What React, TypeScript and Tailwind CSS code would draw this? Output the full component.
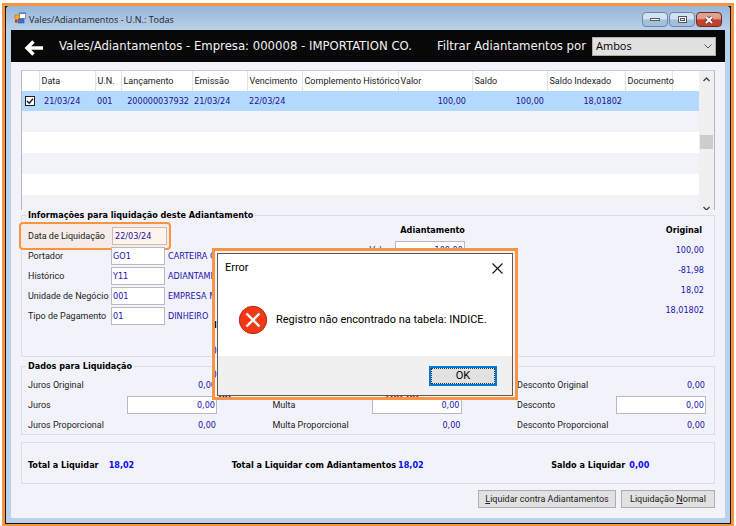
import { useState } from "react";
import type { ReactNode } from "react";

const columns = [
  { label: "", width: "w-[17px]" },
  { label: "Data", width: "w-[56px]" },
  { label: "U.N.", width: "w-[26px]" },
  { label: "Lançamento", width: "w-[71px]" },
  { label: "Emissão", width: "w-[55px]" },
  { label: "Vencimento", width: "w-[55px]" },
  { label: "Complemento Histórico", width: "w-[96px]" },
  { label: "Valor", width: "w-[74px]" },
  { label: "Saldo", width: "w-[75px]" },
  { label: "Saldo Indexado", width: "w-[78px]" },
  { label: "Documento", width: "w-[47px]" },
  { label: "", width: "w-auto" },
];

const identification = [
  { id: "portador", label: "Portador", value: "GO1", description: "CARTEIRA GERAL" },
  { id: "historico", label: "Histórico", value: "Y11", description: "ADIANTAMENTO" },
  { id: "unidade", label: "Unidade de Negócio", value: "001", description: "EMPRESA MATRIZ" },
  { id: "pagamento", label: "Tipo de Pagamento", value: "01", description: "DINHEIRO" },
];

const originals = ["100,00", "-81,98", "18,02", "18,01802"];
const charges = ["Juros", "Multa", "Desconto"];

const field = "border border-[#b9b9c0] bg-white text-[#1a12b0] outline-none";
const caption = "font-['Roboto','Liberation_Sans',sans-serif] whitespace-nowrap";

function FormIcon() {
  return (
    <svg viewBox="0 0 12 12" className="size-3" aria-hidden="true">
      <rect x="5.5" y="1" width="6" height="5.5" fill="#fff" stroke="#7b8fae" />
      <rect x="5" y="0.5" width="7" height="1.5" fill="#5b85c5" />
      <rect x="1" y="3" width="4.5" height="4.5" fill="#f0b020" stroke="#c06a10" strokeWidth="0.6" />
      <rect x="1" y="8" width="2.6" height="2.6" fill="#d03018" />
      <rect x="4.5" y="7" width="5.5" height="4" fill="#3f74d0" stroke="#27509c" strokeWidth="0.6" />
    </svg>
  );
}

function TitleBar() {
  const plain =
    "flex h-[15px] w-[26px] items-center justify-center rounded-sm border border-[#6f87a5] bg-linear-to-b from-[#d3e2f2] from-45% to-[#a4bfdc] to-55%";
  return (
    <div className="flex h-6 items-center rounded-t-sm bg-linear-to-b from-[#98b6d7] to-[#b9d1ea] pr-2 pl-2">
      <FormIcon />
      <span className="ml-[3px] grow pt-1 font-['Open_Sans','Noto_Sans',sans-serif] text-[9px] text-[#1c2430]">
        Vales/Adiantamentos - U.N.: Todas
      </span>
      <div className="flex gap-px pt-[3px]">
        <button className={plain} aria-label="Minimizar">
          <span className="h-[3px] w-2.5 border border-[#555c68] bg-white" />
        </button>
        <button className={plain} aria-label="Maximizar">
          <span className="flex h-[7px] w-[9px] items-center justify-center border border-[#555c68] bg-white">
            <span className="h-[3px] w-[5px] border border-[#555c68]" />
          </span>
        </button>
        <button
          className="flex h-[15px] w-[26px] items-center justify-center rounded-sm border border-[#6b2b2b] bg-linear-to-b from-[#e0a090] from-40% to-[#c2402c] to-55%"
          aria-label="Fechar"
        >
          <svg viewBox="0 0 10 8" className="h-2 w-2.5" aria-hidden="true">
            <path d="M2 1 8 7M8 1 2 7" stroke="#5a3535" strokeWidth="3.4" />
            <path d="M2 1 8 7M8 1 2 7" stroke="#fff" strokeWidth="2" />
          </svg>
        </button>
      </div>
    </div>
  );
}

function Header() {
  return (
    <header className="flex h-8 items-center bg-[#080808] pr-[9px] pl-3 text-[13px] whitespace-nowrap text-[#f2f2f2]">
      <button aria-label="Voltar" className="mt-[3px]">
        <svg viewBox="0 0 20 16" className="h-4 w-5" aria-hidden="true">
          <path d="M10.5 1.5 4 8l6.500 6.500M3.500 8H20" fill="none" stroke="#fff" strokeWidth="3.400" />
        </svg>
      </button>
      <h1 className="ml-4 grow">Vales/Adiantamentos - Empresa: 000008 - IMPORTATION CO.</h1>
      <label htmlFor="filtro">Filtrar Adiantamentos por</label>
      <div className="relative ml-1.5 w-[124px]">
        <select
          id="filtro"
          className="block h-[19px] w-full appearance-none border border-[#adadad] bg-[#e1e1e1] pl-[3px] font-['Open_Sans','Noto_Sans',sans-serif] text-[11px] leading-4 text-black"
        >
          <option>Ambos</option>
        </select>
        <svg viewBox="0 0 8 5" className="pointer-events-none absolute top-[7px] right-1 h-[5px] w-2" aria-hidden="true">
          <path d="M0.500 0.500 4 4 7.500 0.500" fill="none" stroke="#555" />
        </svg>
      </div>
    </header>
  );
}

function Grid() {
  const [checked, setChecked] = useState(true);
  return (
    <div className="flex h-[140px] overflow-hidden border-x border-t border-[#b5b8c2] border-t-[#c9ccd6] bg-[#f2f3f9]">
      <div className="min-w-0 flex-1">
        <table className="w-full table-fixed border-collapse">
          <thead>
            <tr className={`h-5 bg-white text-left text-[#222] ${caption}`}>
              {columns.map((c, i) => (
                <th
                  key={i}
                  className={`${c.width} border-r border-[#e3e3e8] p-0 pl-[2px] font-normal last:border-r-0`}
                >
                  {c.label}
                </th>
              ))}
            </tr>
          </thead>
          <tbody className="text-[#1a128c]">
            <tr className="h-5 bg-[#b3d9ff]">
              <td className="p-0 pl-[3px]">
                <input
                  type="checkbox"
                  aria-label="Selecionar adiantamento"
                  checked={checked}
                  onChange={() => setChecked(!checked)}
                  className="sr-only"
                />
                <svg viewBox="0 0 10 10" className="size-2.5" aria-hidden="true" onClick={() => setChecked(!checked)}>
                  <rect x="0.5" y="0.5" width="9" height="9" fill="#fff" stroke="#222" />
                  {checked && <path d="M2 5 4.200 7.200 8 2.800" fill="none" stroke="#222" strokeWidth="1.500" />}
                </svg>
              </td>
              <td className="p-0 pl-[5px]">21/03/24</td>
              <td className="p-0 pl-[2px]">001</td>
              <td className="p-0 pr-[3px] text-right">200000037932</td>
              <td className="p-0 pl-[2px]">21/03/24</td>
              <td className="p-0 pl-[2px]">22/03/24</td>
              <td />
              <td className="p-0 pr-1.5 text-right">100,00</td>
              <td className="p-0 pr-[3px] text-right">100,00</td>
              <td className="p-0 pr-[3px] text-right">18,01802</td>
              <td />
              <td />
            </tr>
            {[0, 1, 2, 3, 4].map((n) => (
              <tr key={n} className="h-[21px] odd:bg-white even:bg-[#f2f3f9]">
                <td colSpan={12} />
              </tr>
            ))}
          </tbody>
        </table>
      </div>
      <div className="flex w-[15px] flex-col items-center bg-[#f0f0f0]">
        <svg viewBox="0 0 7 5" className="mt-[6px] h-[5px] w-[7px]" aria-hidden="true">
          <path d="M0.500 4 3.500 1 6.500 4" fill="none" stroke="#444" strokeWidth="1.400" />
        </svg>
        <div className="mt-[53px] h-3.5 w-[13px] bg-[#cdcdcd]" />
        <svg viewBox="0 0 7 5" className="mt-auto -mb-px h-[5px] w-[7px]" aria-hidden="true">
          <path d="M0.500 1 3.500 4 6.500 1" fill="none" stroke="#444" strokeWidth="1.400" />
        </svg>
      </div>
    </div>
  );
}

function Group({ title, className, children }: { title: string; className: string; children: ReactNode }) {
  return (
    <fieldset className={`border border-[#dcdee4] ${className}`}>
      <legend className="ml-[4px] h-2.5 px-[2px] leading-[10px] font-bold text-black">{title}</legend>
      {children}
    </fieldset>
  );
}

function Details() {
  return (
    <Group title="Informações para liquidação deste Adiantamento" className="h-[147px]">
      <div className="grid grid-cols-[64%_1fr]">
        <div className="flex justify-between">
          <div className="pt-[2px]">
            <div className="-mb-1 -ml-[3px] flex h-7 w-[152px] items-center rounded-sm border-2 border-[#fb9440] bg-[#f5ebe8] pl-[7px]">
              <label htmlFor="data" className={`w-[84px] ${caption}`}>
                Data de Liquidação
              </label>
              <input
                id="data"
                defaultValue="22/03/24"
                className="h-[18px] w-[55px] border border-[#c4bcbc] bg-[#fff4ea] pl-0.5 text-[#1a12b0] outline-none"
              />
            </div>
            {identification.map((row) => (
              <div key={row.id} className="flex h-5 items-center pl-1.5 whitespace-nowrap">
                <label htmlFor={row.id} className={`w-[83px] ${caption}`}>
                  {row.label}
                </label>
                <input id={row.id} defaultValue={row.value} className={`h-[18px] w-[54px] pl-px ${field}`} />
                <span className="ml-[3px] text-[#1a12b0]">{row.description}</span>
              </div>
            ))}
          </div>
          <div className="flex flex-col items-end">
            <h2 className="flex h-5 items-center font-bold text-black">Adiantamento</h2>
            <div className="flex h-5 items-center gap-[5px]">
              <label htmlFor="valor">Valor</label>
              <input id="valor" defaultValue="100,00" className={`h-[18px] w-[70px] pr-px text-right ${field}`} />
            </div>
          </div>
        </div>
        <div className="pr-2.5 text-right text-[#1a12b0]">
          <h2 className="flex h-5 items-center justify-end pr-[2px] font-bold text-black">Original</h2>
          {originals.map((value) => (
            <p key={value} className="flex h-5 items-center justify-end">
              {value}
            </p>
          ))}
        </div>
      </div>
    </Group>
  );
}

function Settlement() {
  return (
    <Group title="Dados para Liquidação" className="mt-1 h-[74px]">
      <div className="grid grid-cols-[189px_189px_189px] justify-between pt-1 pr-2 pl-1.5">
        {charges.map((name) => (
          <div key={name}>
            <div className="flex h-5 items-center justify-between pr-px">
              <span className={caption}>{name} Original</span>
              <span className="text-[#1a12b0]">0,00</span>
            </div>
            <div className="flex h-5 items-center justify-between">
              <label htmlFor={name} className={caption}>
                {name}
              </label>
              <input id={name} defaultValue="0,00" className={`h-[18px] w-[90px] pr-px text-right ${field}`} />
            </div>
            <div className="flex h-5 items-center justify-between pr-px">
              <span className={caption}>{name} Proporcional</span>
              <span className="text-[#1a12b0]">0,00</span>
            </div>
          </div>
        ))}
      </div>
    </Group>
  );
}

function Total({ label, value, gap }: { label: string; value: string; gap: string }) {
  return (
    <p className={`flex ${gap}`}>
      <span>{label}</span>
      <span className="text-[#0a0af0]">{value}</span>
    </p>
  );
}

function ErrorDialog() {
  return (
    <div className="absolute top-[248px] left-[212px] h-[152px] w-[306px] overflow-hidden border-[3px] border-[#fb9440] bg-[#f2f3fa] p-[2px] pb-px">
      <span className="absolute top-[68px] left-[-1px] text-[9px] font-bold text-black">l</span>
      <span className="absolute top-[94px] left-[-4px] text-[10px] text-[#0a0af0]">0</span>
      <span className="absolute top-[118px] left-[-4px] text-[10px] text-[#0a0af0]">0</span>
      <span className="absolute top-[142px] left-0 text-[10px] leading-[12px] font-bold text-[#1a128c]">,00</span>
      <span className="absolute top-[142px] left-[169px] text-[10px] leading-[12px] font-bold text-[#f00000]">100,00</span>
      <section
        role="alertdialog"
        aria-labelledby="erro-titulo"
        className="relative flex h-[143px] flex-col border border-[#5a5a5a] bg-white font-['Roboto','Open_Sans',sans-serif] text-[11px] text-black"
      >
        <div className="flex h-[28px] items-center justify-between pr-[9px] pl-[7px]">
          <h2 id="erro-titulo">Error</h2>
          <button aria-label="Fechar mensagem">
            <svg viewBox="0 0 11 11" className="size-[11px]" aria-hidden="true">
              <path d="M0.500 0.500 10.500 10.500M10.500 0.500 0.500 10.500" stroke="#111" strokeWidth="1.100" />
            </svg>
          </button>
        </div>
        <div className="flex grow items-center gap-2 pt-px pl-5">
          <svg viewBox="0 0 30 30" className="size-[30px]" aria-hidden="true">
            <circle cx="15" cy="15" r="13.700" fill="#f03a17" stroke="#b5281a" strokeWidth="1" />
            <path d="M8.500 8.500 21.500 21.500M21.500 8.500 8.500 21.500" stroke="#fff" strokeWidth="2.400" />
          </svg>
          <p>Registro não encontrado na tabela: INDICE.</p>
        </div>
        <div className="flex h-[39px] items-center justify-end bg-[#f0f0f0] pr-[15px]">
          <button className="h-5 w-[68px] border-2 border-[#0078d7] bg-[#e1e1e1]">
            <span className="flex h-full items-center justify-center border border-dotted border-[#333]">OK</span>
          </button>
        </div>
      </section>
    </div>
  );
}

export default function App() {
  const action = `h-[18px] border border-[#adadad] bg-[#e1e1e1] text-[#222] ${caption}`;
  return (
    <main className="relative bg-white px-0.5 pt-[3px] pb-px font-['DejaVu_Sans_Condensed','Noto_Sans',sans-serif] text-[9px] leading-[12px] text-[#222]">
      <div className="border-[3px] border-[#fb9440] bg-[#101418]">
        <div className="mx-px mb-px rounded-t-sm bg-[#b9d1ea]">
          <TitleBar />
          <div className="px-[5px] pb-[5px]">
            <Header />
            <div className="bg-[#f2f3fa] px-2.5 pt-2 pb-2.5">
              <Grid />
              <Details />
              <Settlement />
              <div className="mt-[7px] grid h-[42px] grid-cols-[204fr_320fr_163fr] items-center border border-[#dcdee4] pt-1 pl-1.5 font-bold text-black">
                <Total label="Total a Liquidar" value="18,02" gap="gap-2.5" />
                <Total label="Total a Liquidar com Adiantamentos" value="18,02" gap="gap-0.5" />
                <Total label="Saldo a Liquidar" value="0,00" gap="gap-1" />
              </div>
              <div className="mt-1.5 flex justify-end gap-[5px]">
                <button className={`w-[138px] ${action}`}>
                  <u>L</u>iquidar contra Adiantamentos
                </button>
                <button className={`w-[94px] ${action}`}>
                  Liquidação <u>N</u>ormal
                </button>
              </div>
            </div>
          </div>
        </div>
      </div>
      <ErrorDialog />
    </main>
  );
}
